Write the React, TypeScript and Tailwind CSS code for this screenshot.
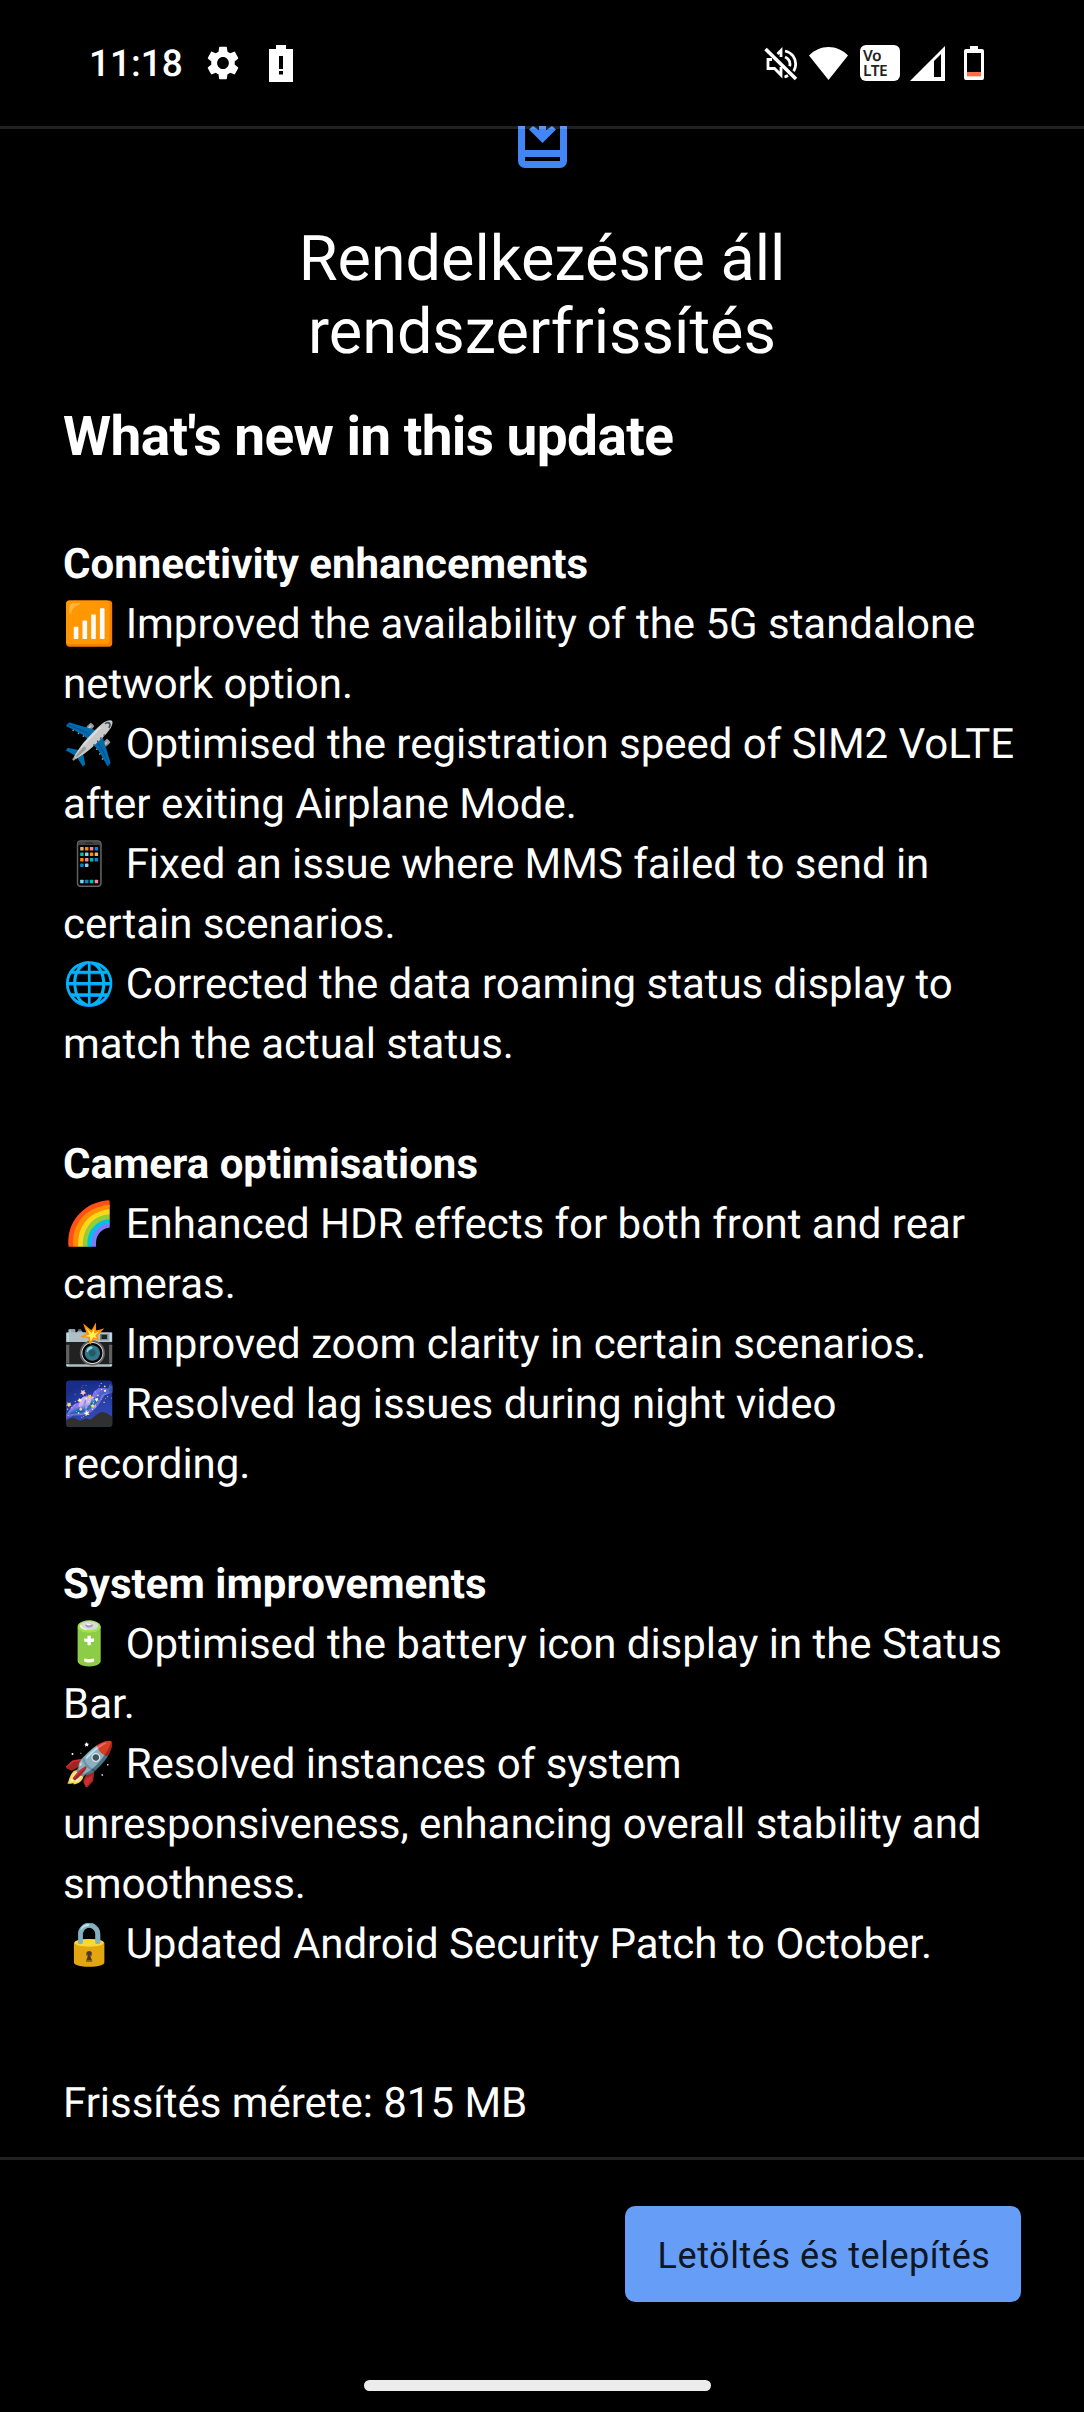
const sections = [
  {
    title: "Connectivity enhancements",
    items: [
      { icon: "📶", text: "Improved the availability of the 5G standalone network option." },
      { icon: "✈️", text: "Optimised the registration speed of SIM2 VoLTE after exiting Airplane Mode." },
      { icon: "📱", text: "Fixed an issue where MMS failed to send in certain scenarios." },
      { icon: "🌐", text: "Corrected the data roaming status display to match the actual status." },
    ],
  },
  {
    title: "Camera optimisations",
    items: [
      { icon: "🌈", text: "Enhanced HDR effects for both front and rear cameras." },
      { icon: "📸", text: "Improved zoom clarity in certain scenarios." },
      { icon: "🌌", text: "Resolved lag issues during night video recording." },
    ],
  },
  {
    title: "System improvements",
    items: [
      { icon: "🔋", text: "Optimised the battery icon display in the Status Bar." },
      { icon: "🚀", text: "Resolved instances of system unresponsiveness, enhancing overall stability and smoothness." },
      { icon: "🔒", text: "Updated Android Security Patch to October." },
    ],
  },
];

function StatusBar() {
  return (
    <header className="flex h-[126px] shrink-0 items-center justify-between pl-[89px] pr-[100px]">
      <div className="flex items-center">
        <span className="w-[118px] pt-[3px] text-[37px] font-medium leading-none">11:18</span>
        <svg className="h-[34px] w-[32px]" viewBox="2.2 2 19.6 20" preserveAspectRatio="none" fill="white">
          <path d="M19.14 12.94c.04-.3.06-.61.06-.94 0-.32-.02-.64-.07-.94l2.03-1.58a.49.49 0 0 0 .12-.61l-1.92-3.32a.488.488 0 0 0-.59-.22l-2.39.96c-.5-.38-1.03-.7-1.62-.94l-.36-2.54a.484.484 0 0 0-.48-.41h-3.84c-.24 0-.43.17-.47.41l-.36 2.54c-.59.24-1.13.57-1.62.94l-2.39-.96c-.22-.08-.47 0-.59.22L2.74 8.87c-.12.21-.08.47.12.61l2.03 1.58c-.05.3-.09.63-.09.94s.02.64.07.94l-2.03 1.58a.49.49 0 0 0-.12.61l1.92 3.32c.12.22.37.29.59.22l2.39-.96c.5.38 1.03.7 1.62.94l.36 2.54c.05.24.24.41.48.41h3.84c.24 0 .44-.17.47-.41l.36-2.54c.59-.24 1.13-.56 1.62-.94l2.39.96c.22.08.47 0 .59-.22l1.92-3.32c.12-.22.07-.47-.12-.61l-2.01-1.58zM12 15.6c-1.98 0-3.6-1.62-3.6-3.6s1.62-3.6 3.6-3.6 3.6 1.62 3.6 3.6-1.62 3.6-3.6 3.6z" />
        </svg>
        <svg className="ml-[30px] h-[37px] w-[24px]" viewBox="0 0 24 37" fill="white">
          <path fillRule="evenodd" d="M7 0h10v4h7v33H0V4h7zM10 11v13h4V11zM10 26v3.600h4V26z" />
        </svg>
      </div>
      <div className="flex items-center">
        <svg className="mt-[2px] h-[34px] w-[34px]" viewBox="0 0 34 34" fill="none" stroke="white" strokeWidth="2.8">
          <path d="M1.500 2 32 32" strokeWidth="3.6" />
          <path d="M8 12.500H4v9h6.500L17 28V20M13.500 7 17 3.500V10" />
          <path d="M21 4c7 1.500 10.700 7 10.700 13 0 2.800-.7 5-2 7.200M21 10c3.300 1.500 5 4 5 7 0 .8-.1 1.500-.4 2.300M20.500 30c1.300-.3 2.400-.8 3.500-1.400" />
        </svg>
        <svg className="ml-[11px] h-[33px] w-[39px]" viewBox="0 0 39 33" fill="white">
          <path d="M0 8.500C5.500 3 12 0 19.500 0S33.500 3 39 8.500L19.500 33z" />
        </svg>
        <div className="ml-3 h-[36px] w-10 rounded-[6px] bg-white pl-[3px] pt-[3px] font-['Noto_Sans',sans-serif] text-[15.5px] font-semibold leading-[15px] tracking-[-0.5px] text-[#222]">
          Vo
          <br />
          LTE
        </div>
        <svg className="ml-[10px] h-[35px] w-[35px]" viewBox="0 0 35 35" fill="white">
          <path fillRule="evenodd" d="M35 0v35H0zM24 15v16h7V8z" />
        </svg>
        <svg className="ml-[19px] h-[34px] w-[20px]" viewBox="0 0 20 34">
          <path fill="white" fillRule="evenodd" d="M6 0h8v3h4a2 2 0 0 1 2 2v27a2 2 0 0 1-2 2H2a2 2 0 0 1-2-2V5a2 2 0 0 1 2-2h4zM3 7v24h14V7z" />
          <path fill="#ff7043" d="M3 26h14v4H3z" />
          <path fill="#ffc9b8" d="M3 30h14v1H3z" />
        </svg>
      </div>
    </header>
  );
}

function SystemUpdateIcon() {
  return (
    <svg className="mx-auto h-[42px] w-[49px] shrink-0" viewBox="0 0 49 42" fill="#4285f4">
      <path fillRule="evenodd" d="M0 0h7v24h35V0h7v35a7 7 0 0 1-7 7H7a7 7 0 0 1-7-7zM7 31v4h35v-4z" />
      <path d="M21 0h7v4.300L34 0 38 3.500 24.500 17 11 3.500 15 0l6 4.300z" />
    </svg>
  );
}

export default function App() {
  return (
    <div className="flex h-[2412px] w-[1084px] flex-col overflow-hidden bg-black font-[Roboto,'Noto_Color_Emoji',sans-serif] text-white [text-rendering:geometricPrecision]">
      <StatusBar />

      <main className="relative flex h-[2034px] shrink-0 flex-col px-[63px]">
        <div className="absolute inset-x-0 top-0 h-[3px] bg-white/13" />
        <SystemUpdateIcon />
        <h1 className="mx-auto mt-[55px] w-[560px] text-center text-[63px] leading-[73px] tracking-[-0.05px]">
          Rendelkezésre áll rendszerfrissítés
        </h1>
        <h2 className="mt-[31px] text-[55px] font-bold leading-[74px] tracking-[-0.6px]">What's new in this update</h2>

        <div className="mt-[61px] text-[42px] leading-[60px]">
          {sections.map((section) => (
            <section key={section.title} className="mb-[60px]">
              <h3 className="font-bold">{section.title}</h3>
              {section.items.map((item) => (
                <p key={item.text} className="tracking-[-0.03px]">{`${item.icon} ${item.text}`}</p>
              ))}
            </section>
          ))}
        </div>
        <p className="mt-[39px] text-[42px] leading-[60px] tracking-[-0.03px]">Frissítés mérete: 815 MB</p>
      </main>

      <footer className="flex grow flex-col border-t-[3px] border-[#212121] -mt-[3px]">
        <button className="mr-[63px] mt-[46px] h-[96px] w-[396px] self-end rounded-[10px] bg-[#669df6] pl-[2px] pt-[3px] text-[36px] leading-none tracking-[0.54px] text-[#0e1724]">
          Letöltés és telepítés
        </button>
        <div className="ml-[364px] mt-[78px] h-[11px] w-[347px] rounded-full bg-[#ececec]" />
      </footer>
    </div>
  );
}
